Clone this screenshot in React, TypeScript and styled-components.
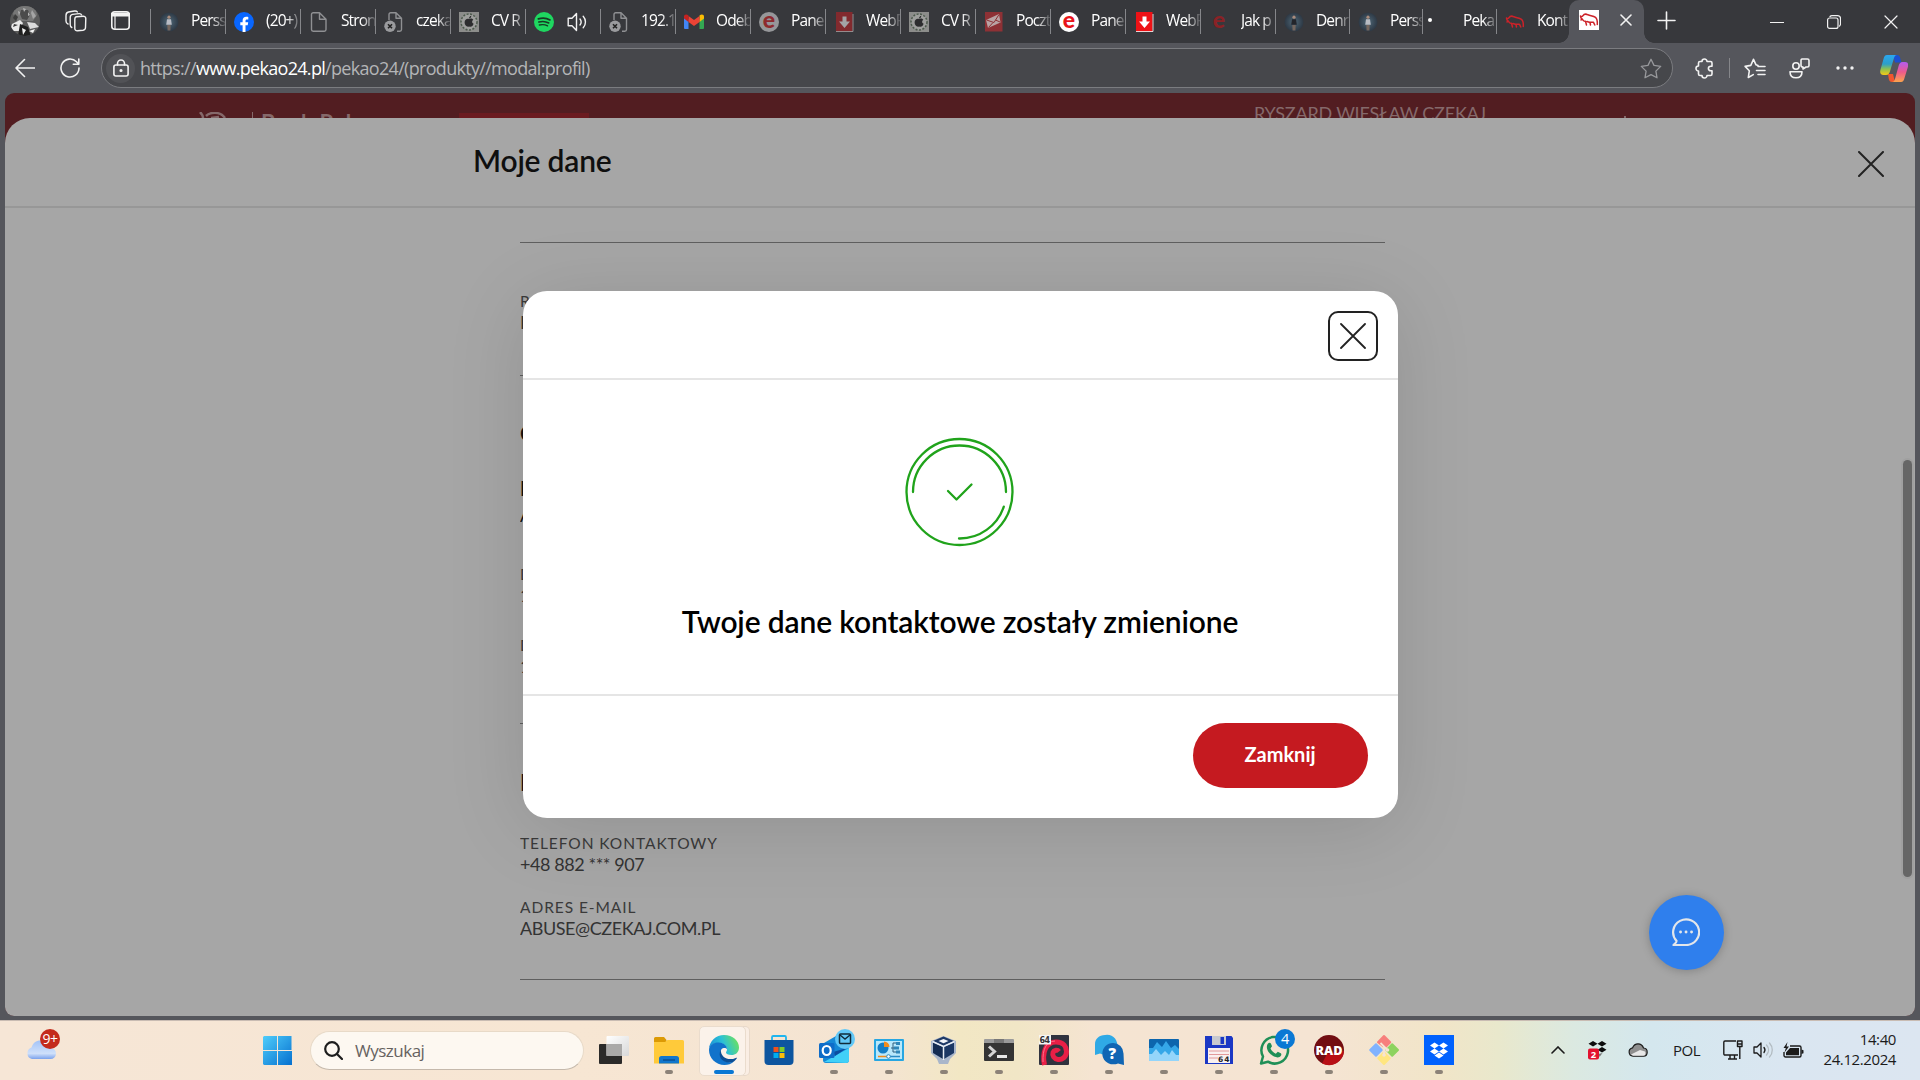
import React from "react";
import styled, { createGlobalStyle } from "styled-components";

const GlobalStyle = createGlobalStyle`
  * { box-sizing: border-box; }
  html, body { margin: 0; padding: 0; }
  body { overflow: hidden; background: #55565c; }
  button { font: inherit; border: 0; padding: 0; background: none; }
  svg { display: block; flex: none; }
`;

const ui = `"Open Sans", "Noto Sans", sans-serif`;
const lato = `Lato, "Open Sans", sans-serif`;

const Screen = styled.div`
  width: 1920px;
  height: 1080px;
  display: flex;
  flex-direction: column;
  overflow: hidden;
  background: #55565c;
  font-family: ${ui};
`;

/* ---------- tab strip ---------- */

const TabStrip = styled.header`
  height: 43px;
  flex: none;
  display: flex;
  background: #37383c;
  color: #fff;
`;

const StripTools = styled.div`
  width: 150px;
  height: 41px;
  display: flex;
  align-items: center;
  padding-left: 10px;
`;

const ToolSlot = styled.div<{ $w: number }>`
  width: ${(p) => p.$w}px;
  flex: none;
  display: flex;
  justify-content: center;
`;

const TabItem = styled.div<{ $w: number }>`
  width: ${(p) => p.$w}px;
  height: 25px;
  margin-top: 9px;
  padding-left: 8px;
  display: flex;
  align-items: center;
  border-left: 1px solid #85868a;
  overflow: hidden;
`;

const TabLabel = styled.span`
  flex: 1;
  margin-left: 12px;
  padding-bottom: 3px;
  font-size: 15.5px;
  letter-spacing: -0.9px;
  line-height: 22px;
  white-space: nowrap;
  overflow: hidden;
  mask-image: linear-gradient(to right, #000 60%, rgba(0, 0, 0, 0.15) 100%);
`;

const UnreadDot = styled.span`
  width: 4px;
  height: 4px;
  margin: 0 16px 4px -3px;
  border-radius: 50%;
  background: #fff;
  flex: none;
  & + span { margin-left: 15px; }
`;

const ActiveTab = styled.div`
  width: 75px;
  height: 43px;
  display: flex;
  align-items: center;
  gap: 21px;
  padding: 0 0 3px 10px;
  border-radius: 10px 10px 0 0;
  background: #55565c;
  position: relative;
  &::before, &::after {
    content: "";
    position: absolute;
    bottom: 0;
    width: 10px;
    height: 10px;
  }
  &::before { left: -10px; background: radial-gradient(circle at 0 0, transparent 9.5px, #55565c 10px); }
  &::after { right: -10px; background: radial-gradient(circle at 100% 0, transparent 9.5px, #55565c 10px); }
`;

const StripActions = styled.div`
  flex: 1;
  height: 43px;
  display: flex;
  align-items: center;
  justify-content: space-between;
  padding: 0 22px 3px 13px;
`;

const WindowControls = styled.div`
  display: flex;
  gap: 43px;
  padding-top: 3px;
`;

/* ---------- toolbar ---------- */

const Toolbar = styled.div`
  height: 50px;
  flex: none;
  display: flex;
  align-items: center;
  padding: 0 0 0 15px;
`;

const NavButtons = styled.div`
  width: 86px;
  flex: none;
  display: flex;
  gap: 25px;
`;

const AddressBar = styled.div`
  width: 1572px;
  flex: none;
  height: 40px;
  display: flex;
  align-items: center;
  padding: 0 10px 0 4px;
  border: 1px solid #7b7c80;
  border-radius: 20px;
  background: #46474b;
`;

const LockBadge = styled.div`
  width: 29px;
  height: 29px;
  border-radius: 50%;
  background: #515256;
  display: flex;
  align-items: center;
  justify-content: center;
`;

const Url = styled.div`
  flex: 1;
  margin-left: 5px;
  padding-bottom: 1px;
  font-size: 18px;
  line-height: 24px;
  letter-spacing: -0.69px;
  color: #b4b5b7;
  white-space: nowrap;
  b { color: #fff; font-weight: 400; }
`;

const ToolbarIcons = styled.div`
  flex: 1;
  display: flex;
  align-items: center;
  padding-left: 21px;
`;

const ToolbarDivider = styled.div`
  width: 1px;
  flex: none;
  height: 20px;
  background: #85868a;
  margin: 0 14px;
`;

/* ---------- page ---------- */

const PageFrame = styled.main`
  width: 1910px;
  height: 923px;
  flex: none;
  margin: 0 5px 4px;
  border-radius: 9px;
  overflow: hidden;
  background: #521d21;
  position: relative;
  font-family: ${lato};
`;

const BankHeader = styled.div`
  height: 25px;
  display: flex;
  overflow: hidden;
  color: #85696b;
  white-space: nowrap;
`;

const BrandLogo = styled.div`
  display: flex;
  margin: 19px 0 0 193px;
  width: 261px;
`;

const BrandSeparator = styled.i`
  width: 1px;
  height: 12px;
  margin: 0 8px 0 22px;
  background: #85696b;
`;

const BrandName = styled.span`
  font-size: 22px;
  line-height: 21px;
  letter-spacing: 0.7px;
  font-weight: 700;
`;

const BrandRibbon = styled.div`
  width: 130px;
  height: 10px;
  margin-top: 20px;
  background: #6b1b20;
`;

const CustomerName = styled.span`
  margin-left: 665px;
  padding-top: 9px;
  font-size: 18px;
  line-height: 22px;
  letter-spacing: -0.2px;
`;

const HeaderTick = styled.i`
  width: 2px;
  height: 3px;
  margin: 23px 0 0 138px;
  background: #85696b;
`;

const Sheet = styled.section`
  height: 898px;
  border-radius: 25px 25px 0 0;
  background: #a6a6a6;
  display: flex;
  flex-direction: column;
`;

const SheetHeader = styled.div`
  height: 90px;
  flex: none;
  display: flex;
  justify-content: space-between;
  padding: 0 31px 0 468px;
  border-bottom: 2px solid #979797;
`;

const SheetTitle = styled.h1`
  margin: 23px 0 0;
  font-size: 30px;
  line-height: 38px;
  font-weight: 600;
  letter-spacing: -0.2px;
  color: #0f0f0f;
`;

const CloseSheet = styled.button`
  align-self: flex-start;
  margin-top: 33px;
`;

const SheetBody = styled.div`
  flex: 1;
  width: 865px;
  margin-left: 515px;
  padding-top: 34px;
  display: flex;
  flex-direction: column;
  overflow: hidden;
`;

const Rule = styled.hr`
  width: 100%;
  height: 1px;
  flex: none;
  border: 0;
  margin: 0;
  background: #5f5f5f;
`;

const FieldGroup = styled.div<{ $h: number; $top: number }>`
  height: ${(p) => p.$h}px;
  flex: none;
  padding-top: ${(p) => p.$top}px;
`;

const FieldLabel = styled.div`
  height: 20px;
  line-height: 20px;
  font-size: 15.5px;
  letter-spacing: 0.93px;
  color: #3a3a3a;
`;

const FieldValue = styled.div<{ $gap?: number }>`
  height: 22px;
  line-height: 22px;
  margin-bottom: ${(p) => p.$gap ?? 0}px;
  font-size: 18px;
  letter-spacing: -0.43px;
  color: #333;
`;

const SectionTitle = styled.h2<{ $size: number; $lh: number; $gap: number; $w?: number }>`
  margin: 0 0 ${(p) => p.$gap}px;
  font-size: ${(p) => p.$size}px;
  line-height: ${(p) => p.$lh}px;
  font-weight: ${(p) => p.$w ?? 700};
  color: #111;
`;

const ScrollThumb = styled.div`
  position: absolute;
  right: 3px;
  top: 367px;
  width: 9px;
  height: 417px;
  border-radius: 5px;
  background: #666;
  box-shadow: 0 0 0 2px #a0a0a0;
`;

const ChatButton = styled.button`
  position: absolute;
  left: 1644px;
  top: 802px;
  width: 75px;
  height: 75px;
  border-radius: 50%;
  background: #2f7fed;
  box-shadow: 0 1px 10px rgba(0, 0, 0, 0.22);
  display: flex;
  align-items: center;
  justify-content: center;
  padding: 0 1px 1px 0;
`;

/* ---------- dialog ---------- */

const Dialog = styled.div`
  position: absolute;
  left: 518px;
  top: 198px;
  width: 875px;
  height: 527px;
  border-radius: 24px;
  background: #fff;
  box-shadow: 0 10px 80px rgba(0, 0, 0, 0.12);
  display: flex;
  flex-direction: column;
`;

const DialogHeader = styled.div`
  height: 89px;
  flex: none;
  display: flex;
  justify-content: flex-end;
  padding: 20px 20px 0 0;
  border-bottom: 2px solid #e5e5e5;
`;

const DialogClose = styled.button`
  width: 50px;
  height: 50px;
  border: 2px solid #222;
  border-radius: 10px;
  display: flex;
  justify-content: center;
  padding: 10px 1px 0 0;
`;

const DialogBody = styled.div`
  flex: 1;
  display: flex;
  flex-direction: column;
  align-items: center;
  padding: 57px 1px 0 0;
`;

const DialogMessage = styled.h2`
  margin: 54px 0 0;
  font-size: 30px;
  line-height: 40px;
  font-weight: 600;
  letter-spacing: -0.14px;
  color: #000;
  white-space: nowrap;
`;

const DialogFooter = styled.div`
  height: 124px;
  flex: none;
  display: flex;
  justify-content: flex-end;
  padding: 27px 30px 0 0;
  border-top: 2px solid #e5e5e5;
`;

const PrimaryButton = styled.button`
  width: 175px;
  height: 65px;
  border-radius: 33px;
  background: #c51a20;
  color: #fff;
  font-size: 20px;
  font-weight: 700;
  line-height: 24px;
  padding: 0 1px 4px 0;
`;

/* ---------- taskbar ---------- */

const Taskbar = styled.footer`
  height: 60px;
  flex: none;
  display: flex;
  background: linear-gradient(90deg, #f6e6d6 0, #f7e6d3 30%, #f4e4d2 46%, #f2e7c4 50%, #f1e6c6 53%, #f5e4d2 57%, #f5e4d3 69%, #f1e5c8 75%, #e9e8cc 78%, #dbe9e1 82%, #d4e7ee 86%, #dae6f1 93%, #dce6f1 100%);
  border-top: 1px solid #c9bcb3;
`;

const Weather = styled.div`
  width: 263px;
  padding: 7px 0 0 26px;
`;

const SearchBox = styled.div`
  width: 274px;
  height: 39px;
  margin: 10px 0 0 17px;
  padding-left: 13px;
  display: flex;
  align-items: center;
  border-radius: 20px;
  border: 1px solid #e8dac8;
  border-bottom-color: #c5b9ac;
  background: #fdf8f1;
  color: #666260;
  font-size: 17px;
  letter-spacing: -0.5px;
  gap: 12px;
  span { padding-bottom: 1px; }
`;

const StartButton = styled.div`
  padding-top: 15px;
`;

const AppRow = styled.div`
  display: flex;
  margin-left: 2px;
`;

const AppSlot = styled.div<{ $active?: boolean; $run?: boolean }>`
  width: 55px;
  height: 59px;
  padding-top: 14px;
  display: flex;
  flex-direction: column;
  align-items: center;
  position: relative;
  &::before {
    content: "";
    display: ${(p) => (p.$active ? "block" : "none")};
    position: absolute;
    left: 3px;
    top: 5px;
    width: 45px;
    height: 48px;
    border: 1px solid #eadccd;
    border-radius: 5px;
    background: #fbf2ea;
    box-shadow: 4px 0 0 -1px #faeee4, 4px 0 0 0 #e8d9ca;
  }
  &::after {
    content: "";
    margin-top: 5px;
    width: ${(p) => (p.$active ? 20 : 8)}px;
    height: 4px;
    border-radius: 2px;
    background: ${(p) => (p.$active ? "#0a78d4" : p.$run ? "#8c8278" : "transparent")};
    position: relative;
  }
  svg { position: relative; overflow: visible; }
`;

const Tray = styled.div`
  flex: 1;
  display: flex;
  align-items: center;
  justify-content: flex-end;
  padding: 0 24px 1px 0;
  color: #1b1b1b;
  font-size: 15px;
  letter-spacing: -0.5px;
`;

const TraySlot = styled.div<{ $w: number }>`
  width: ${(p) => p.$w}px;
  display: flex;
`;

const Clock = styled.div`
  width: 92px;
  text-align: right;
  line-height: 20px;
  padding-bottom: 3px;
  font-size: 15px;
  letter-spacing: -0.4px;
`;

/* ---------- shared drawings ---------- */

const line = { fill: "none", stroke: "#f2f2f2", strokeWidth: 1.6, strokeLinecap: "round" as const, strokeLinejoin: "round" as const };

const Cross = ({ size, w, color }: { size: number; w: number; color: string }) => (
  <svg width={size} height={size} viewBox={`0 0 ${size} ${size}`} fill="none" stroke={color} strokeWidth={w} strokeLinecap="round">
    <path d={`M1 1L${size - 1} ${size - 1}M${size - 1} 1L1 ${size - 1}`} />
  </svg>
);

const Avatar = () => (
  <svg width="30" height="30" viewBox="0 0 30 30">
    <clipPath id="av"><circle cx="15" cy="15" r="15" /></clipPath>
    <g clipPath="url(#av)">
      <rect width="30" height="30" fill="#5a5a5a" />
      <path d="M5 0h20l2 9-4 6H7L3 8z" fill="#777" />
      <path d="M11 4h7l2 5-3 5-5-1-2-5z" fill="#4b4b4b" />
      <path d="M13 2l3 1-2 3zM18 6l2 3-2 1zM8 5l2 1-1 4z" fill="#b5b5b5" />
      <path d="M2 18l8-4 3 3-4 8H0z" fill="#e9e9e9" />
      <path d="M4 18l4 1-5 2z" fill="#3a3a3a" />
      <path d="M17 16l8 1 4 4-9 2z" fill="#dcdcdc" />
      <path d="M10 18l8 3 3 9H8z" fill="#202020" />
      <path d="M22 4l4 6-3 3-2-6z" fill="#a5a5a5" />
      <path d="M12 22l4 2-3 5zM19 25l6-2-2 4z" fill="#f2f2f2" />
      <path d="M5 8l3 3-2 4-3-3z" fill="#3d3d3d" />
    </g>
  </svg>
);

const PersonIcon = ({ shirt }: { shirt: string }) => (
  <svg width="20" height="20" viewBox="0 0 20 20">
    <defs><radialGradient id={"p" + shirt.slice(1)}><stop offset="0" stopColor="#4f6878" /><stop offset="1" stopColor="#2d3844" /></radialGradient></defs>
    <circle cx="10" cy="10" r="9.5" fill={`url(#p${shirt.slice(1)})`} />
    <circle cx="10" cy="5.2" r="1.6" fill="#a98b7c" />
    <path d="M8 7.2h4l.8 5.500H7.200z" fill={shirt} />
    <path d="M8.300 13h3.400l-.3 5.500H8.600z" fill="#75675f" />
  </svg>
);

const FacebookIcon = () => (
  <svg width="20" height="20" viewBox="0 0 20 20">
    <circle cx="10" cy="10" r="10" fill="#0866ff" />
    <path d="M8.600 20v-6.700H6.300v-3h2.300V8.700c0-2.600 1.400-4 3.700-4 .8 0 1.500.1 2 .2v2.600h-1.300c-1.200 0-1.500.6-1.500 1.500v1.300h2.700l-.5 3h-2.200V20z" fill="#fff" />
  </svg>
);

const FileIcon = ({ broken }: { broken?: boolean }) => (
  <svg width="20" height="20" viewBox="0 0 20 20" fill="none" stroke="#8f9093" strokeWidth="1.400" strokeLinejoin="round">
    {broken ? (
      <>
        <path d="M5 8V2.500A1.700 1.700 0 0 1 6.700.8H12l5.500 5.500v11.200a1.700 1.700 0 0 1-1.700 1.700H13M12 .8v5.500h5.500" />
        <circle cx="6" cy="14.300" r="5.700" fill="#9a9b9e" stroke="none" />
        <path d="M4 12.300l4 4M8 12.300l-4 4" stroke="#222" strokeWidth="1.600" />
      </>
    ) : (
      <path d="M10.500.8H4.200a1.700 1.700 0 0 0-1.700 1.700v15a1.700 1.700 0 0 0 1.700 1.700h11.100a1.700 1.700 0 0 0 1.700-1.700V7.200zM10.500.8v6.400H17" />
    )}
  </svg>
);

const AppleBadge = () => (
  <svg width="20" height="20" viewBox="0 0 20 20">
    <rect width="20" height="20" fill="#8c8d8b" />
    <circle cx="10" cy="10" r="8" fill="#9d9e9c" stroke="#4c5a4c" strokeWidth="1.500" strokeDasharray="2 1.500" />
    <path d="M10 7c1.500-1 3.500-.6 4.300.7-1.800 1.200-1.500 3.300.3 4.100C13.800 14 12.500 15.500 10 14.600 7.500 15.500 5.500 13 5.600 10.300 5.700 7.600 8 6.200 10 7z" fill="#2c2c2e" />
    <path d="M10 6.500c0-1.500 1-2.600 2.300-2.800 0 1.500-1 2.700-2.300 2.800z" fill="#2c2c2e" />
  </svg>
);

const SpotifyIcon = () => (
  <svg width="20" height="20" viewBox="0 0 20 20">
    <circle cx="10" cy="10" r="10" fill="#1ed760" />
    <g fill="none" stroke="#173a24" strokeLinecap="round">
      <path d="M4.300 6.800c4-1.200 8.500-.8 11.700 1.100" strokeWidth="1.800" />
      <path d="M4.800 10c3.400-1 7.200-.6 10 1" strokeWidth="1.500" />
      <path d="M5.300 13c2.900-.8 5.900-.5 8.300.9" strokeWidth="1.300" />
    </g>
  </svg>
);

const SpeakerIcon = ({ color = "#f2f2f2" }: { color?: string }) => (
  <svg width="20" height="20" viewBox="0 0 20 20" fill="none" stroke={color} strokeWidth="1.400" strokeLinejoin="round" strokeLinecap="round">
    <path d="M9.500 1.500v17L5 13.800H1.200V6.200H5z" />
    <path d="M13 7c1.400 1.800 1.400 4.200 0 6" />
    <path d="M16.200 4.200c3 3.300 3 8.300 0 11.600" />
  </svg>
);

const GmailIcon = () => (
  <svg width="20" height="16" viewBox="0 0 20 16">
    <path d="M0 2v12a1 1 0 0 0 1 1h3.500V5z" fill="#4285f4" />
    <path d="M20 2v12a1 1 0 0 1-1 1h-3.500V5z" fill="#34a853" />
    <path d="M15.500 1.500V8L20 4.600V2.500c0-2-2.300-3-4.500-1z" fill="#fbbc04" />
    <path d="M4.500 8V2L10 6.100 15.500 2v6L10 12.100z" fill="#ea4335" />
    <path d="M0 2.500v2.100L4.500 8V1.500C2.300-.5 0 .5 0 2.500z" fill="#c5221f" />
  </svg>
);

const Letter = styled.span<{ $bg: string; $fg: string }>`
  width: 20px;
  height: 20px;
  flex: none;
  display: flex;
  align-items: center;
  justify-content: center;
  border-radius: 50%;
  background: ${(p) => p.$bg};
  color: ${(p) => p.$fg};
  font: 900 23px/18px ${lato};
  padding-bottom: 5px;
`;

const DownloadIcon = ({ bg, fg }: { bg: string; fg: string }) => (
  <svg width="20" height="20" viewBox="0 0 20 20">
    <path d="M2 0h16.500v19.500H2z" fill={bg} />
    <path d="M2 19.500h17V2" fill="none" stroke={fg} strokeWidth=".8" />
    <path d="M8.500 4.500h4v5h3.500l-5.500 6.500-5.500-6.500h3.500z" fill={fg} />
  </svg>
);

const MailSquare = () => (
  <svg width="20" height="20" viewBox="0 0 20 20">
    <path d="M1 0h17.500v19.500H1z" fill="#8e3135" />
    <path d="M2 8l13-6 1.500 8.500L4 16z" fill="#b9a3a4" />
    <path d="M2.500 8l7.500 2.500L15 2.500M4.500 15.500l4.500-5M16 10l-4.500-2" fill="none" stroke="#8e3135" strokeWidth="1" />
  </svg>
);

const Bison = ({ boxed }: { boxed?: boolean }) => (
  <svg width="20" height="20" viewBox="0 0 20 20" fill="none" stroke="#cc2229" strokeWidth="1.500" strokeLinejoin="round" strokeLinecap="round">
    {boxed && <rect width="20" height="20" fill="#fff" stroke="none" />}
    <path d="M1.500 6c1 .8 2 .6 2.500-.3C5 4 7 3.800 9 4.800c2.500 1 5.500 1 7.500 2.500 1.500 1.200 2 3.500 1.800 7.200M1.500 6c.3 2 1 3.500 2.500 4 .5 1 1.500 1.500 2.500 1.300L7.500 15M8 11.500l3 1 .5 2.500M11 12.300h3.500l1.300 2.700M3 8.700L2 10" />
  </svg>
);

type Tab = { icon: React.ReactNode; label: string; extra?: React.ReactNode; w?: number };

const tabs: Tab[] = [
  { icon: <PersonIcon shirt="#b9bcc4" />, label: "Perss" },
  { icon: <FacebookIcon />, label: "(20+)" },
  { icon: <FileIcon />, label: "Stron" },
  { icon: <FileIcon broken />, label: "czeka" },
  { icon: <AppleBadge />, label: "CV R" },
  { icon: <SpotifyIcon />, label: "", extra: <SpeakerIcon /> },
  { icon: <FileIcon broken />, label: "192.1" },
  { icon: <GmailIcon />, label: "Odeb" },
  { icon: <Letter $bg="#96979a" $fg="#8e2a2e">e</Letter>, label: "Pane" },
  { icon: <DownloadIcon bg="#822a2e" fg="#a3a3a5" />, label: "WebF" },
  { icon: <AppleBadge />, label: "CV R" },
  { icon: <MailSquare />, label: "Poczt" },
  { icon: <Letter $bg="#fff" $fg="#e8141a">e</Letter>, label: "Pane" },
  { icon: <DownloadIcon bg="#ee1216" fg="#fff" />, label: "WebF" },
  { icon: <Letter $bg="transparent" $fg="#8a2226">e</Letter>, label: "Jak p" },
  { icon: <PersonIcon shirt="#23252b" />, label: "Denr", w: 74 },
  { icon: <PersonIcon shirt="#b9bcc3" />, label: "Perss", w: 73 },
  { icon: <UnreadDot />, label: "Peka", w: 74 },
  { icon: <Bison />, label: "Kont", w: 73 },
];

const CopilotIcon = () => (
  <svg width="28" height="27" viewBox="0 0 28 27">
    <defs>
      <linearGradient id="c1" x1="0" y1="0" x2="0" y2="1"><stop offset="0" stopColor="#2aa7f0" /><stop offset=".45" stopColor="#2c9fc9" /><stop offset=".7" stopColor="#8cc152" /><stop offset="1" stopColor="#f6c915" /></linearGradient>
      <linearGradient id="c2" x1="0" y1="0" x2="0" y2="1"><stop offset="0" stopColor="#b45cf0" /><stop offset=".5" stopColor="#ee5a8c" /><stop offset="1" stopColor="#fba44d" /></linearGradient>
    </defs>
    <path d="M13 0h4c2 0 2.700 1.400 3.200 3l1.200 4.500H15z" fill="#1b4fd0" />
    <path d="M8 19h5l2 8h-3c-2 0-2.700-1-3.200-3z" fill="#f0562e" />
    <path d="M7 0h10c-2 0-2.700 2-3.300 4l-3.600 12c-.6 2-1.500 4-4.100 4H3.500C.5 20-.3 18 .4 15L3.500 4C4.200 1.500 5 0 7 0z" fill="url(#c1)" />
    <path d="M21 27H12c2 0 2.700-2 3.300-4L18.600 11c.6-2 1.500-4 4.100-4h2.300c3 0 3.500 2 2.900 5L24.500 23c-.7 2.500-1.500 4-3.500 4z" fill="url(#c2)" />
  </svg>
);

/* ---------- taskbar drawings ---------- */

const AppArt = ({ children }: { children: React.ReactNode }) => (
  <svg width="30" height="30" viewBox="0 0 30 30">{children}</svg>
);

const apps: { run?: boolean; active?: boolean; art: React.ReactNode }[] = [
  { art: <><defs><linearGradient id="tv" x1="0" y1="0" x2="1" y2="1"><stop offset="0" stopColor="#fff" /><stop offset="1" stopColor="#d8d8d8" /></linearGradient></defs><rect x="0" y="9" width="23" height="20" rx="1" fill="#2b2a29" /><rect x="7.500" y="1" width="22.500" height="20" rx="1" fill="url(#tv)" /><path d="M7.500 9H23v12H7.500z" fill="#aaa9a8" /></> },
  { run: true, art: <><path d="M0 3.500A1.500 1.500 0 0 1 1.500 2H10l2.500 3v4H0z" fill="#dc9a05" /><path d="M0 7h11l2.500-2H28.500A1.500 1.500 0 0 1 30 6.500v22H0z" fill="#ffca3a" /><path d="M5 28.500v-5A2.500 2.500 0 0 1 7.500 21h15a2.500 2.500 0 0 1 2.500 2.500v5z" fill="#1277cc" /><path d="M9 25h12" stroke="#0b4f93" strokeWidth="1.500" /></> },
  { active: true, art: <><defs><linearGradient id="eg" x1="0" y1=".6" x2="1" y2=".3"><stop offset="0" stopColor="#1a8fd8" /><stop offset=".5" stopColor="#2cc1d5" /><stop offset="1" stopColor="#6fe25a" /></linearGradient></defs><path d="M0 14C.5 6 7 0 15 0c9 0 15 6 15 12.500 0 5-3.500 7.500-7.500 7.500-3.500 0-5.500-1.200-5.500-2.500 0-.8 1-1.200 1-3C18 11 14.500 8 10 8 5 8 1 10 0 14z" fill="url(#eg)" /><path d="M0 15C0 10 4.500 7.500 9.500 7.500c5 0 8.500 3.200 8.500 6.500-1-1.500-6.500-2.500-6.500 4 0 6.500 6 11 13.500 8.500C22.500 29 19 30 15.500 30 6.500 30 0 23 0 15z" fill="#1173cb" /><path d="M11.800 14.500C8 22 14 29.500 24 27c1.800-1 3-2.500 3.700-3.500.5-.8-.2-1-1-.6C20 26 11.500 23 11.800 14.500z" fill="#0c4f96" /></> },
  { art: <><path d="M8 7V2.200A1.200 1.200 0 0 1 9.200 1h11.600A1.200 1.200 0 0 1 22 2.200V7" fill="none" stroke="#1fb5ee" strokeWidth="1.800" /><path d="M.5 5h29v21a4 4 0 0 1-4 4h-21a4 4 0 0 1-4-4z" fill="#0d559f" /><path d="M9.500 12h5v5h-5z" fill="#f1511b" /><path d="M15.500 12h5v5h-5z" fill="#80cc28" /><path d="M9.500 18h5v5h-5z" fill="#00adef" /><path d="M15.500 18h5v5h-5z" fill="#fbbc09" /></> },
  { run: true, art: <><path d="M5 8L17 1l13 11v13a3 3 0 0 1-3 3H7a3 3 0 0 1-3-3z" fill="#1588d6" /><path d="M5 27l25-14v12a3 3 0 0 1-3 3z" fill="#41d0f8" /><path d="M14 17l14-4-12 8z" fill="#0b4da0" /><rect x="0" y="8" width="15.500" height="15" rx="1.500" fill="#0f6cc8" /><ellipse cx="7.700" cy="15.500" rx="4" ry="4.500" fill="none" stroke="#fff" strokeWidth="2.200" /><circle cx="26" cy="4" r="10" fill="#62c8f7" /><rect x="20.500" y="-1" width="11" height="9.500" rx="1" fill="none" stroke="#102b3a" strokeWidth="1.500" /><path d="M21 0l5 4 5-4" fill="none" stroke="#102b3a" strokeWidth="1.400" /></> },
  { run: true, art: <><rect x="0" y="4" width="30" height="22" rx="1" fill="#27a6e2" /><rect x="2" y="6" width="26" height="18" fill="#b9e8fb" /><circle cx="9" cy="13" r="5.500" fill="#137ec7" /><path d="M10 12V6.500a5.500 5.500 0 0 1 5.500 5.500z" fill="#f28c1c" /><path d="M17 13h4M19 13V8h3M19 13v4h3" stroke="#2c5d7c" fill="none" /><path d="M22 7h4v3h-4zM20 11.500h5v3h-5zM22 15.500h4v3h-4z" fill="#2f86b9" /><path d="M4 21.500h10" stroke="#ef8b1b" strokeWidth="1.500" /><path d="M14 21.500h12" stroke="#2a8bc4" strokeWidth="1.500" /><circle cx="14.500" cy="21.500" r="1.800" fill="#fff" stroke="#2a8bc4" /></> },
  { run: true, art: <><path d="M14.500 1L27 6v12l-6 6-2 5h-9l-2-5-6-6V6z" fill="#a9b6ca" /><path d="M14.500 1.500L25 6l-10.500 5L4 6z" fill="#1f3a67" /><path d="M14.500 4l5 2-5 2.300L9.500 6z" fill="#f4f6fa" /><path d="M4 7.500l10 4.500v12L4 18z" fill="#142c52" /><path d="M25 7.500L15 12v12l10-6z" fill="#1c3864" /><path d="M3.500 6.500l11 5 11-5M14.500 11.500V25" stroke="#e8edf5" strokeWidth="1.500" fill="none" /></> },
  { run: true, art: <><path d="M0 5a1 1 0 0 1 1-1h28a1 1 0 0 1 1 1v4H0z" fill="#9b9b9b" /><path d="M10 4h10v4H10z" fill="#777" /><path d="M0 8h30v17a1 1 0 0 1-1 1H1a1 1 0 0 1-1-1z" fill="#343434" /><path d="M5 11.500l5.500 5L5 21.500" fill="none" stroke="#d5d5d5" strokeWidth="3" /><path d="M13 21.500h10" stroke="#e8e8e8" strokeWidth="3" /></> },
  { run: true, art: <><rect width="30" height="30" rx="1" fill="#30333f" /><path d="M5.500 30C3 19 6 7 17 7c8 0 10.500 5 10.500 9.500C27.500 22 23 25 19 24.500c-4-.5-6-4-5-7 1-2.500 4.500-3 6-1" fill="none" stroke="#e91f46" strokeWidth="5" /><path d="M4 27C3.500 14 7 6.500 16 6" fill="none" stroke="#ff708b" strokeWidth="1" /><rect width="12" height="9.500" fill="#f5f5f5" /><text x=".6" y="7.800" fontSize="8" fontWeight="700" fontFamily="DejaVu Sans" textLength="10.500" fill="#333">64</text></> },
  { run: true, art: <><path d="M11 0a10 10 0 1 1 0 19.500c-3 0-4-.5-5-1L1 20V9C1 4 5 0 11 0z" fill="#2fa9e6" /><path d="M19 8a10.500 10.500 0 0 1 10.500 10.500L30 30l-6-1.500c-2 .8-3 .8-5 .8A10.500 10.500 0 0 1 19 8z" fill="#1065b3" /><text x="14.500" y="24" fontSize="15" fontWeight="800" fontFamily="Open Sans" fill="#fff">?</text></> },
  { run: true, art: <><rect y="4" width="30" height="22" rx="1" fill="#0c65ad" /><path d="M0 13h4l4-6 5 5 4-6 5 7 4-3 4 4v12H0z" fill="#35a7e8" /><path d="M0 19h3l4-5 5 6 4-4 4 4 3-5 4 5h3v6H0z" fill="#94d5fa" /></> },
  { run: true, art: <><path d="M1 1h26.500L29 3v26H1z" fill="#1b37c4" /><path d="M8 1h14v9H8z" fill="#c8c9cf" /><path d="M16.500 2h3.500v7h-3.500z" fill="#1b37c4" /><path d="M4 13h22v15H4z" fill="#f9f0f0" /><path d="M5 16h20M5 19.500h20M5 23h9" stroke="#e29a9a" strokeWidth="1" /><text x="14" y="27" fontSize="7.500" fontWeight="700" fontFamily="DejaVu Sans" textLength="11.500" fill="#222">64</text></> },
  { run: true, art: <><path d="M2 28.500l2-7A13.300 13.300 0 1 1 9 26.700z" fill="none" stroke="#1f8f57" strokeWidth="2.500" strokeLinejoin="round" /><path d="M9 8.500c1-1.200 2.500-1 3 .3l1 2.500-1.500 2.200c1.200 2.500 2.800 4 5.300 5.200l2-1.900 3 1.500c1 .8.600 2.700-1.300 3.700-2 1-6 .2-9.600-3.500C7.500 15 7 11 9 8.500z" fill="#1f8f57" /><circle cx="26" cy="4" r="10" fill="#0a78d4" /><text x="22" y="9.300" fontSize="14.500" fontFamily="Open Sans" fill="#fff">4</text></> },
  { run: true, art: <><circle cx="15" cy="15" r="15" fill="#720d12" /><path d="M13 19l17-3A15 15 0 0 1 8 28.500z" fill="#b80f16" /><text x="1.500" y="19.500" fontSize="12.500" fontWeight="800" fontFamily="Open Sans" textLength="27" lengthAdjust="spacingAndGlyphs" fill="#fff">RAD</text></> },
  { run: true, art: <><g strokeWidth="2" strokeLinejoin="round"><path d="M15 1l6.200 6.200L16 12.500l-7-5.300z" fill="#f77f7c" stroke="#f77f7c" /><path d="M7 9.300l5.700 5.700L7 20.700 1.200 15z" fill="#80b3ff" stroke="#80b3ff" /><path d="M23.200 9.300L29 15l-5.800 5.700-5.700-5.700z" fill="#8dd35f" stroke="#8dd35f" /><path d="M15 17.500l5.700 5.700L15 29l-5.700-5.800z" fill="#ffe680" stroke="#ffe680" /></g><path d="M11.500 8l7 7M15 11v9" fill="none" stroke="#f6e4d3" strokeWidth="1.800" /><circle cx="18.500" cy="15" r="1.800" fill="#f6e4d3" /><circle cx="15" cy="20" r="1.800" fill="#f6e4d3" /></> },
  { run: true, art: <><rect width="30" height="30" fill="#0061fe" /><path d="M10.500 7.500l4.500 3-4.500 3-4.500-3zM19.500 7.500l4.500 3-4.500 3-4.500-3zM10.500 13.500l4.500 3-4.500 3-4.500-3zM19.500 13.500l4.500 3-4.500 3-4.500-3zM15 17.500l4.500 3-4.500 3-4.500-3z" fill="#fff" /></> },
];

const WeatherIcon = () => (
  <svg width="40" height="40" viewBox="0 0 40 40">
    <defs><linearGradient id="cl" x1="0" y1="0" x2="0" y2="1"><stop offset="0" stopColor="#a3c3f8" /><stop offset=".7" stopColor="#cfe0fa" /><stop offset="1" stopColor="#7ba2ec" /></linearGradient></defs>
    <path d="M6 31a6 6 0 0 1-.5-11.500C7 15 10 12.500 14.500 12.500c5 0 8 3 8.500 7.500h1.500a5.500 5.500 0 0 1 0 11z" fill="url(#cl)" />
    <circle cx="24" cy="11" r="10" fill="#c42b1c" />
    <text x="24" y="16.300" textAnchor="middle" fontFamily="Open Sans" fontSize="14" letterSpacing="-.5" fill="#fff">9+</text>
  </svg>
);

const StartIcon = () => (
  <svg width="30" height="30" viewBox="0 0 30 30">
    <defs><linearGradient id="st" x1="0" y1="0" x2="1" y2="1" gradientUnits="objectBoundingBox"><stop offset="0" stopColor="#4fcdfb" /><stop offset="1" stopColor="#0670cf" /></linearGradient></defs>
    <path d="M1 0h13v14H0V1zM15 0h13.500v14H15zM0 15h14v14H1l-1-1zM15 15h14v14H15z" fill="url(#st)" />
  </svg>
);

export default function App() {
  return (
    <Screen>
      <GlobalStyle />
      <TabStrip>
        <StripTools>
          <ToolSlot $w={30}><Avatar /></ToolSlot>
          <ToolSlot $w={71}>
            <svg width="22" height="22" viewBox="0 0 22 22" {...line} strokeWidth={1.4}>
              <path d="M11.500 6.800l6.500-.6c1.500-.1 2.800.8 2.800 2.300l-.3 9c0 1.500-1 2.500-2.500 2.700l-5.500.6c-1.500.2-2.700-.8-2.700-2.300V9.500c0-1.500.5-2.600 1.700-2.700z" />
              <path d="M6.800 17.500C5.500 17 5.200 16 5.200 14.500V7.500C5.200 5.500 6 4.600 7.500 4.400l6.500-.8c1.200-.1 2.200.3 2.600 1.300" />
              <path d="M3 14C1.500 13.500 1 12.500 1 11V5.500C1 3.500 2 2.300 3.500 2L9.500 1c1.300-.2 2.200 0 2.800.9" />
            </svg>
          </ToolSlot>
          <ToolSlot $w={18}>
            <svg width="19" height="19" viewBox="0 0 19 19" {...line}>
              <rect x=".8" y=".8" width="17.400" height="17.400" rx="3" />
              <path d="M1.500 3.500h16" strokeWidth="4" /><path d="M4 5v13" strokeWidth="1.200" />
            </svg>
          </ToolSlot>
        </StripTools>
        {tabs.map((t, i) => (
          <TabItem key={i} $w={t.w ?? 75}>
            {t.icon}
            {t.extra ? <ToolSlot $w={45}>{t.extra}</ToolSlot> : <TabLabel>{t.label}</TabLabel>}
          </TabItem>
        ))}
        <ActiveTab>
          <Bison boxed />
          <svg width="12" height="12" viewBox="0 0 12 12" {...line}><path d="M1 1l10 10M11 1L1 11" /></svg>
        </ActiveTab>
        <StripActions>
          <svg width="19" height="19" viewBox="0 0 19 19" {...line}><path d="M9.500 1v17M1 9.500h17" /></svg>
          <WindowControls>
            <svg width="14" height="14" viewBox="0 0 14 14" {...line} strokeWidth={1.2}><path d="M.5 7.500h13" /></svg>
            <svg width="14" height="14" viewBox="0 0 14 14" {...line} strokeWidth={1.2}><rect x=".6" y="3" width="10.400" height="10.400" rx="2" /><path d="M3 1.500c.5-.6 1-.9 2-.9h5.500a3 3 0 0 1 3 3V9c0 1-.3 1.500-.9 2" /></svg>
            <Cross size={14} w={1.2} color="#f2f2f2" />
          </WindowControls>
        </StripActions>
      </TabStrip>

      <Toolbar>
        <NavButtons>
          <svg width="20" height="20" viewBox="0 0 20 20" {...line}><path d="M9.500 1.500L1 10l8.500 8.500M1 10h18.500" /></svg>
          <svg width="20" height="20" viewBox="0 0 20 20" {...line}><path d="M19 10a9 9 0 1 1-2.500-6.200L18.500 6M18.800 1v5.200h-5.500" /></svg>
        </NavButtons>
        <AddressBar>
          <LockBadge>
            <svg width="16" height="18" viewBox="0 0 16 18" {...line}><rect x=".9" y="6" width="14.200" height="11" rx="2" /><path d="M4.500 6V4.500a3.500 3.500 0 0 1 7 0V6" /><circle cx="8" cy="11.500" r=".8" fill="#fff" /></svg>
          </LockBadge>
          <Url>https://<b>www.pekao24.pl</b>/pekao24/(produkty//modal:profil)</Url>
          <svg width="22" height="21" viewBox="0 0 22 21" {...line} stroke="#98999c" strokeWidth={1.3}><path d="M11 1.300l3 6.100 6.700 1-4.800 4.700 1.100 6.700-6-3.200-6 3.200 1.100-6.700L1.300 8.400l6.700-1z" /></svg>
        </AddressBar>
        <ToolbarIcons>
          <svg width="21" height="21" viewBox="0 0 21 21" {...line}><path d="M6 3.500h2a2.500 2.500 0 0 1 5 0h3.500a1.500 1.500 0 0 1 1.500 1.500v3.200h-1.300a2.300 2.300 0 0 0 0 4.600H18V16a1.500 1.500 0 0 1-1.500 1.500H13a2.500 2.500 0 0 1-5 0H6A1.500 1.500 0 0 1 4.500 16v-3a2.500 2.500 0 0 1 0-5V5A1.500 1.500 0 0 1 6 3.500z" /></svg>
          <ToolbarDivider />
          <ToolSlot $w={22}><svg width="22" height="21" viewBox="0 0 22 21" {...line}><path d="M14 7.400L12 6.800 9.500 1.300 6.800 7.400l-5.700 1 4.200 4.400-1 6.700 5-2.900M14 8.500h7M12.500 12.500H21M14 16.500h7" /></svg></ToolSlot>
          <ToolSlot $w={67}><svg width="21" height="21" viewBox="0 0 21 21" {...line}><circle cx="7" cy="8" r="3.200" /><path d="M1 13.800h12c0 4-2 6-6 6s-6-2-6-6zM13 1h5.500A1.500 1.500 0 0 1 20 2.500v5A1.500 1.500 0 0 1 18.500 9H17l-3 2V9c-1.300 0-2-.6-2-1.500v-5A1.500 1.500 0 0 1 13 1z" /></svg></ToolSlot>
          <ToolSlot $w={24}><svg width="18" height="4" viewBox="0 0 18 4" fill="#f2f2f2"><circle cx="2" cy="2" r="1.700" /><circle cx="9" cy="2" r="1.700" /><circle cx="16" cy="2" r="1.700" /></svg></ToolSlot>
          <ToolSlot $w={73}><CopilotIcon /></ToolSlot>
        </ToolbarIcons>
      </Toolbar>

      <PageFrame>
        <BankHeader>
          <BrandLogo>
            <svg width="32" height="8" viewBox="0 0 32 8" fill="none" stroke="#85696b" strokeWidth="2.500"><path d="M2 0c2 2 3 4 3 6M8 4c4-4 14-5 19 2M13 6l8-1" /></svg>
            <BrandSeparator />
            <BrandName>Bank Pekao</BrandName>
          </BrandLogo>
          <BrandRibbon />
          <CustomerName>RYSZARD WIESŁAW CZEKAJ</CustomerName>
          <HeaderTick />
        </BankHeader>
        <Sheet>
          <SheetHeader>
            <SheetTitle>Moje dane</SheetTitle>
            <CloseSheet><Cross size={26} w={2} color="#222" /></CloseSheet>
          </SheetHeader>
          <SheetBody>
            <Rule />
            <FieldGroup $h={132} $top={48}>
              <FieldLabel>R</FieldLabel>
              <FieldValue>I</FieldValue>
            </FieldGroup>
            <Rule />
            <FieldGroup $h={347} $top={42}>
              <SectionTitle $size={23} $lh={30} $gap={25}>O</SectionTitle>
              <SectionTitle $size={20} $lh={30} $gap={0}>D</SectionTitle>
              <SectionTitle $size={18} $lh={24} $gap={37} $w={400}>A</SectionTitle>
              <FieldLabel>D</FieldLabel>
              <FieldValue $gap={29}>1</FieldValue>
              <FieldLabel>D</FieldLabel>
              <FieldValue>1</FieldValue>
            </FieldGroup>
            <Rule />
            <FieldGroup $h={255} $top={42}>
              <SectionTitle $size={23} $lh={32} $gap={35}>D</SectionTitle>
              <FieldLabel>TELEFON KONTAKTOWY</FieldLabel>
              <FieldValue $gap={22}>+48 882 *** 907</FieldValue>
              <FieldLabel>ADRES E-MAIL</FieldLabel>
              <FieldValue>ABUSE@CZEKAJ.COM.PL</FieldValue>
            </FieldGroup>
            <Rule />
          </SheetBody>
        </Sheet>
        <ScrollThumb />
        <ChatButton>
          <svg width="28" height="28" viewBox="0 0 28 28" fill="none" stroke="#e3e6ea" strokeWidth="2.200" strokeLinejoin="round" strokeLinecap="round">
            <path d="M14 27a13 12.800 0 1 0-9.500-4.200c.4 1.500-1.300 2.500-3 4.200z" />
            <path d="M8.500 14h.1M14 14h.1M19.500 14h.1" strokeWidth="2.800" />
          </svg>
        </ChatButton>
        <Dialog role="dialog">
          <DialogHeader>
            <DialogClose><Cross size={26} w={1.8} color="#222" /></DialogClose>
          </DialogHeader>
          <DialogBody>
            <svg width="110" height="110" viewBox="0.5 0 110 110" fill="none" stroke="#20a31b" strokeWidth="2.300" strokeLinecap="round" strokeLinejoin="round">
              <circle cx="55" cy="55" r="53" />
              <path d="M8.500 55a46.500 46.500 0 0 1 93 0M99.300 69.700A46.500 46.500 0 0 1 54.500 101.500" />
              <path d="M43.500 54l8.500 8.500L67 47.500" />
            </svg>
            <DialogMessage>Twoje dane kontaktowe zostały zmienione</DialogMessage>
          </DialogBody>
          <DialogFooter>
            <PrimaryButton>Zamknij</PrimaryButton>
          </DialogFooter>
        </Dialog>
      </PageFrame>

      <Taskbar>
        <Weather><WeatherIcon /></Weather>
        <StartButton><StartIcon /></StartButton>
        <SearchBox>
          <svg width="19" height="19" viewBox="0 0 19 19" fill="none" stroke="#1d1d1d" strokeWidth="2.200" strokeLinecap="round"><circle cx="8" cy="8" r="6.800" /><path d="M13 13l5 5" /></svg>
          <span>Wyszukaj</span>
        </SearchBox>
        <AppRow>
          {apps.map((a, i) => (
            <AppSlot key={i} $run={a.run} $active={a.active}><AppArt>{a.art}</AppArt></AppSlot>
          ))}
        </AppRow>
        <Tray>
          <TraySlot $w={37}><svg width="14" height="8" viewBox="0 0 14 8" fill="none" stroke="#1b1b1b" strokeWidth="1.600" strokeLinecap="round"><path d="M1 7l6-6 6 6" /></svg></TraySlot>
          <TraySlot $w={40}>
            <svg width="19" height="19" viewBox="0 0 19 19">
              <path d="M5 0l4.500 2.700L5 5.400.5 2.700zM14 0l4.500 2.700L14 5.400 9.500 2.700zM14 6l4.500 2.700L14 11.400 9.500 8.700z" fill="#0c0c0c" /><path d="M10.500 13l4-1-3 4z" fill="#777" />
              <rect x="0" y="7.500" width="11" height="11" rx="2" fill="#e3122f" />
              <text x="2.700" y="16.500" fontSize="9.500" fontWeight="700" fontFamily="Open Sans" fill="#fff">2</text>
            </svg>
          </TraySlot>
          <TraySlot $w={45}><svg width="20" height="14" viewBox="0 0 20 14"><path d="M5 13.200a4.200 4.200 0 0 1-.5-8.300C5.500 2.500 7.500.8 10 .8c2.700 0 4.700 1.700 5.500 4.200 5 .3 4.800 8.200 0 8.200z" fill="#8f8f8f" stroke="#1b1b1b" strokeWidth="1.200" /><path d="M3 11.500l9-4.500 5 1.500c1 1.500.5 4-1.500 4.200H5z" fill="#e8e8e8" /></svg></TraySlot>
          <TraySlot $w={50}>POL</TraySlot>
          <TraySlot $w={30}><svg width="20" height="20" viewBox="0 0 20 20" fill="none" stroke="#1b1b1b" strokeWidth="1.400" strokeLinejoin="round"><path d="M13 1H2A1.200 1.200 0 0 0 .8 2.200v11.600A1.200 1.200 0 0 0 2 15h13M5 19h9M7 15v4M11.500 15v4M14.500 1h4.500v5.500h-4.500zM14.500 4h4.500M16.800 7v12" /></svg></TraySlot>
          <TraySlot $w={30}>
            <svg width="20" height="18" viewBox="0 0 20 18" fill="none" stroke="#1b1b1b" strokeWidth="1.300" strokeLinejoin="round" strokeLinecap="round"><path d="M8 2v14l-4-4H1V6h3z" /><path d="M11 6.500c1.200 1.500 1.200 3.500 0 5" /><path d="M13.500 4c2.700 3 2.700 7 0 10M16.500 2c3.700 4 3.700 10 0 14" stroke="#b3bcc2" /></svg>
          </TraySlot>
          <TraySlot $w={21}><svg width="21" height="17" viewBox="0 0 21 17"><path d="M7 4h9.500A1.500 1.500 0 0 1 18 5.500v8a1.500 1.500 0 0 1-1.500 1.500h-14A1.500 1.500 0 0 1 1 13.500V10" fill="none" stroke="#1b1b1b" strokeWidth="1.400" /><path d="M3 10.500L7 6h9v7.200H3zM18.500 7.500l2 .8v3l-2 .7zM4.500 0L.5 6h2.300L1.500 10.500 6 4.500H3.500z" fill="#1b1b1b" /></svg></TraySlot>
          <Clock>14:40<br />24.12.2024</Clock>
        </Tray>
      </Taskbar>
    </Screen>
  );
}
